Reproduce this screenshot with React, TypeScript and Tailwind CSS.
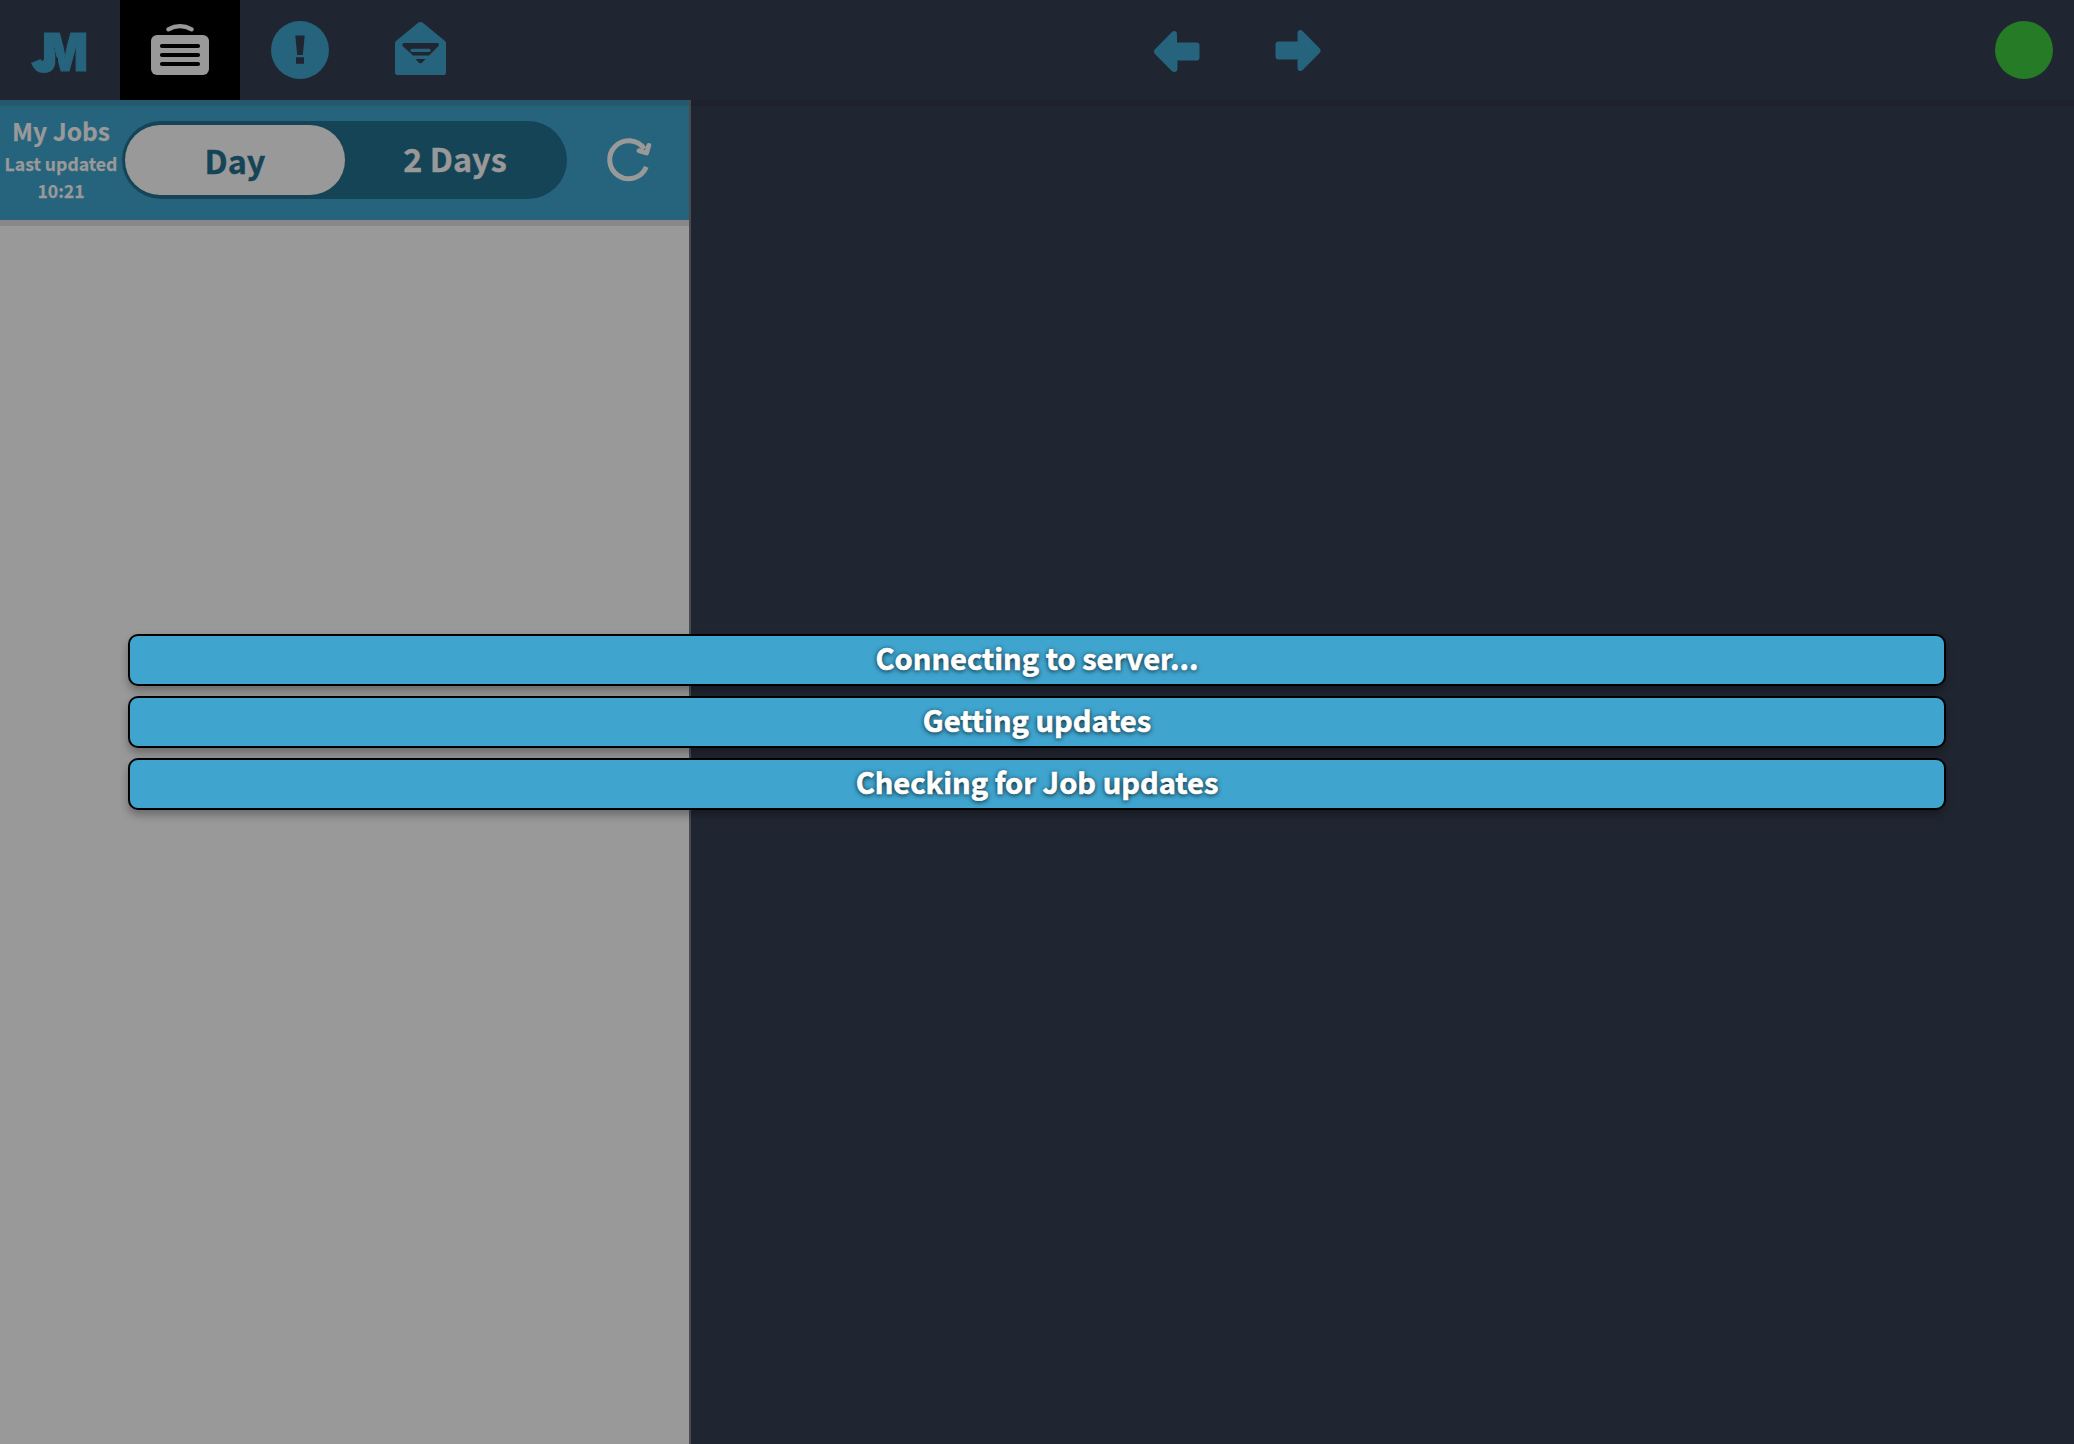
import React from "react";

const messages = ["Connecting to server...", "Getting updates", "Checking for Job updates"];

function NavCell({ active = false, label, children }: { active?: boolean; label: string; children: React.ReactNode }) {
  return (
    <button aria-label={label} className={active ? "h-[100px] w-[120px] shrink-0 bg-black" : "h-[100px] w-[120px] shrink-0"}>
      <svg width="120" height="100" viewBox="0 0 120 100" fill="none">
        {children}
      </svg>
    </button>
  );
}

function TopBar() {
  return (
    <header className="flex h-[100px] shrink-0 items-center bg-[#202631] text-[#26637c]">
      <NavCell label="Home">
        <clipPath id="logo-clip">
          <path d="M40 30H90V75H58V58H40Z" />
        </clipPath>
        <text x="42.2" y="71.4" clipPath="url(#logo-clip)" fontFamily="Inter" fontWeight="900" fontSize="52" textLength="45.7" lengthAdjust="spacingAndGlyphs" fill="currentColor" stroke="currentColor" strokeWidth="1.2">M</text>
        <path d="M44 50V57.500Q44 61 42 60.800Q41 60.600 40.500 59L31 63Q35 73 43.500 73Q55.300 73 55.300 61V50Z" fill="currentColor" />
      </NavCell>
      <NavCell active label="Jobs">
        <path d="M48.300 29.300Q60 23 71.700 29.300" stroke="#999" strokeWidth="4.200" strokeLinecap="round" />
        <rect x="31" y="35" width="58" height="40" rx="6" fill="#999" />
        <path d="M42 46H78M42 55H78M42 64H78" stroke="#000" strokeWidth="4.200" strokeLinecap="round" />
      </NavCell>
      <NavCell label="Alerts">
        <circle cx="60" cy="50" r="29" fill="currentColor" />
        <path d="M55.300 35.500H64.700L62.800 55H57.200ZM56 57.300H64V63.700H56Z" fill="#202631" />
      </NavCell>
      <NavCell label="Messages">
        <path d="M58.500 22.500Q60.500 21.300 62.500 22.500L85 41Q86 41.800 86 43V73.500L84.500 75H36.500L35 73.500V43Q35 41.800 36 41Z" fill="currentColor" />
        <path d="M43.500 43H78Q79.500 44 78.500 46L69 55.500H53L42.500 46Q42 44 43.500 43ZM55.500 59H65.500L62 62.700Q60.500 64 59 62.700Z" fill="#202631" />
        <path d="M52 50.400H69" stroke="currentColor" strokeWidth="3.200" strokeLinecap="round" />
      </NavCell>
      <div className="flex flex-1 justify-center">
        <NavCell label="Back">
          <path d="M36.500 53.500Q35 51.700 36.500 49.700L53.500 32.500Q55.500 30.500 57.500 31.200Q59 32 59 34V42.500H78.500Q81.500 42.500 81.500 45.500V57.500Q81.500 60.500 78.500 60.500H59.500V68.500Q59.500 71 57.500 71.800Q55.500 72.500 53.500 70.700Z" fill="currentColor" />
        </NavCell>
        <NavCell label="Forward">
          <path d="M82 52.500Q83.500 50.700 82 48.800L65 31.400Q63 29.300 61 30.200Q59.500 31 59.500 33V41.500H40.500Q37.500 41.500 37.500 44.500V56.500Q37.500 59.500 40.500 59.500H59.500V67.500Q59.500 70 61 70.800Q63 71.700 65 69.700Z" fill="currentColor" />
        </NavCell>
      </div>
      <div className="mr-[21px] size-[58px] rounded-full bg-[#267b26]" />
    </header>
  );
}

function JobsHeader() {
  return (
    <div className="flex h-[120px] items-center border-t-[6px] border-[#24596f] bg-[#26637c] pb-[6px] font-bold text-[#999]">
      <div className="flex h-full w-[122px] flex-col items-center whitespace-nowrap pt-2 [-webkit-text-stroke:0.25px_#999]">
        <div className="text-[24.6px] leading-[32px]">My Jobs</div>
        <div className="mt-1 text-[17.6px] leading-[27px]">Last updated</div>
        <div className="text-[17.6px] leading-[27px]">10:21</div>
      </div>
      <div className="flex h-[78px] w-[445px] items-center rounded-full bg-[#164457] text-[32.4px] leading-[40px]">
        <div className="ml-[3px] flex h-[70px] w-[220px] items-center justify-center rounded-full bg-[#999] text-[#164457] [-webkit-text-stroke:0.4px_#164457]">Day</div>
        <div className="flex flex-1 justify-center pr-[2px] pb-[4px] [-webkit-text-stroke:0.4px_#999]">2 Days</div>
      </div>
      <svg className="ml-[31px]" width="60" height="60" viewBox="-0.3 0.6 60 60" fill="none" stroke="#999" strokeWidth="5">
        <path d="M48 37.500A19 19 0 1 1 46 19.500" />
        <path d="M40.700 21.200L48.300 23.600L50.500 16" strokeWidth="4.800" strokeLinecap="round" strokeLinejoin="round" />
      </svg>
    </div>
  );
}

export default function App() {
  return (
    <div className="relative flex h-[1444px] w-[2074px] flex-col overflow-hidden bg-[#202631] font-['Noto_Sans_CJK_SC',sans-serif]">
      <TopBar />
      <main className="flex flex-1">
        <aside className="w-[691px] border-r-2 border-[#484a4e] bg-[#999]">
          <JobsHeader />
          <div className="h-[6px] bg-[#888]" />
        </aside>
        <section className="flex-1 border-t-[6px] border-[#1f222c]" />
      </main>
      <div className="absolute inset-0 flex flex-col justify-center gap-[10px] px-[128px]">
        {messages.map((message) => (
          <div
            key={message}
            className="flex h-[52px] items-center justify-center rounded-[10px] border-2 border-black bg-[#3fa5cf] pb-[7px] text-[29.1px] leading-[40px] font-bold text-white shadow-[0_5px_8px_rgba(0,0,0,0.3)] [-webkit-text-stroke:0.6px_white] [text-shadow:0_1px_5px_rgba(0,0,0,0.9)]"
          >
            {message}
          </div>
        ))}
      </div>
    </div>
  );
}
